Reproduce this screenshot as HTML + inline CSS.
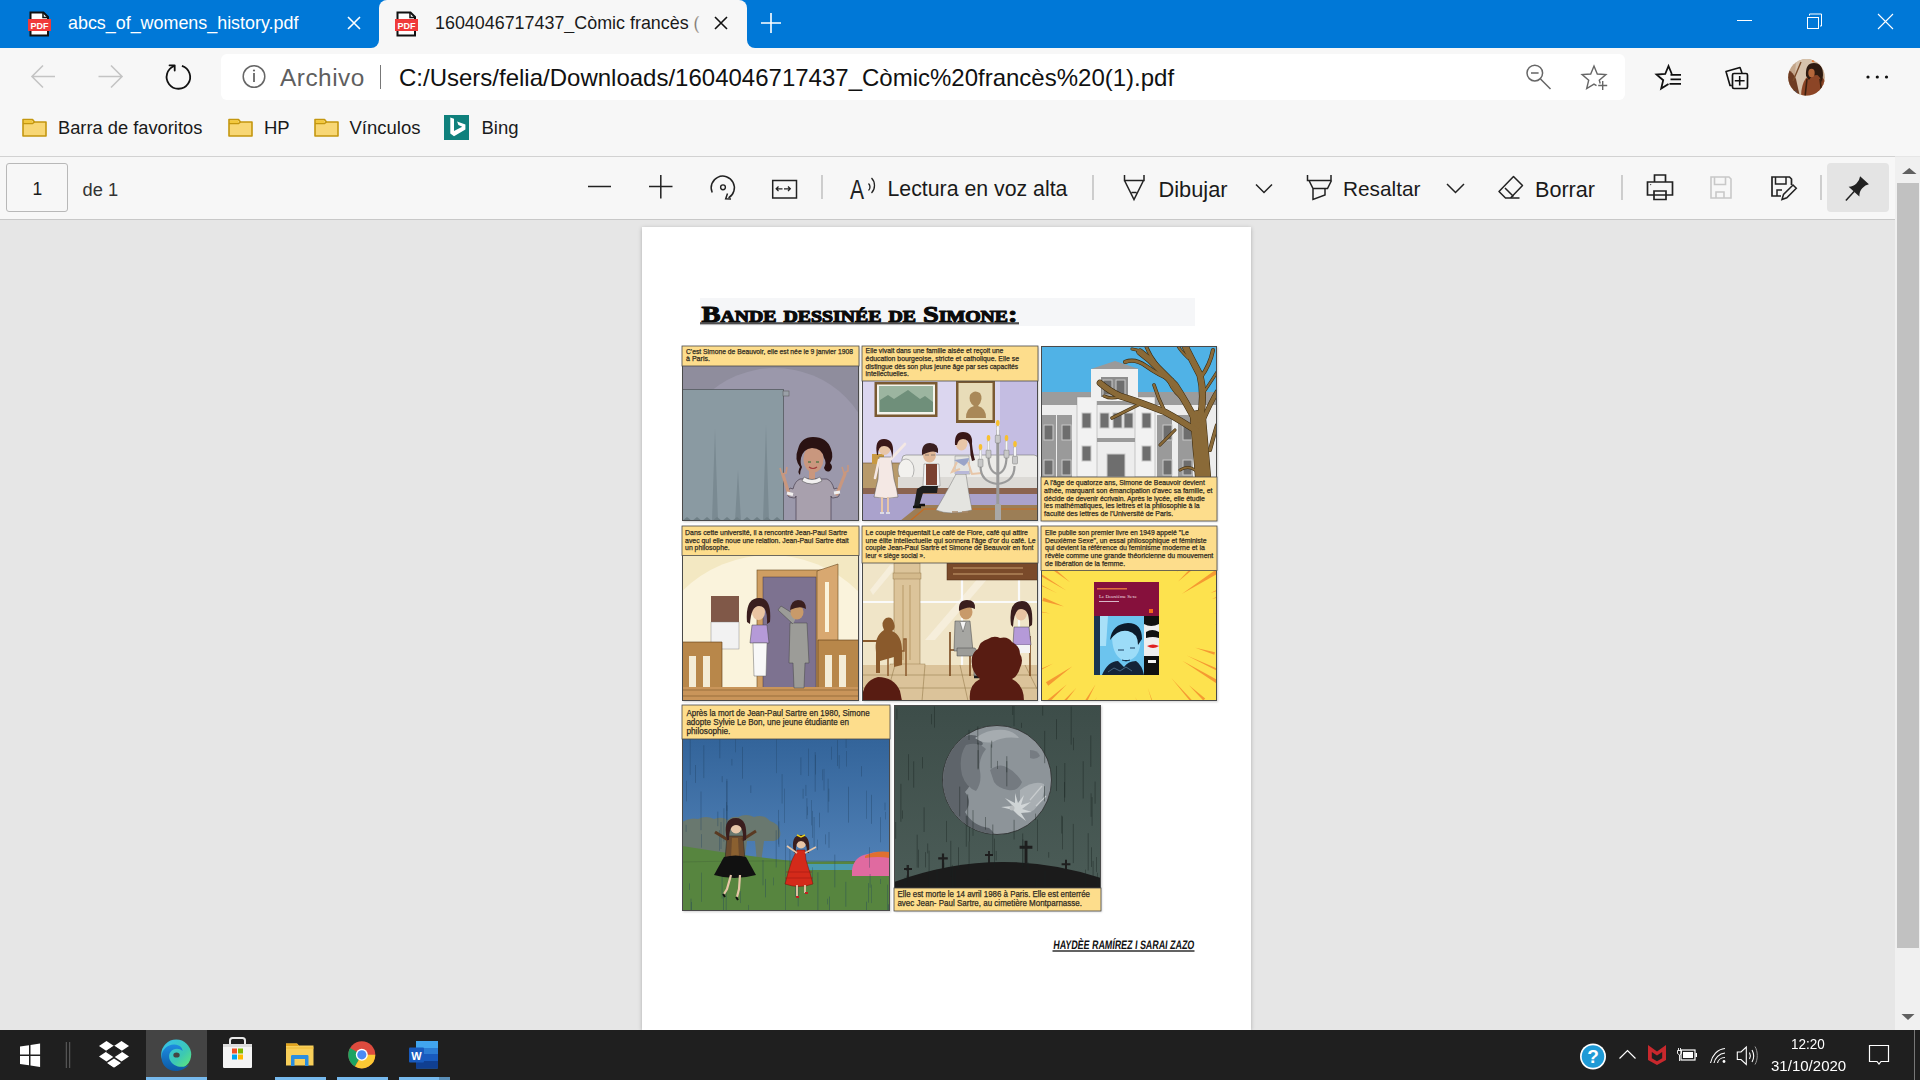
<!DOCTYPE html>
<html><head><meta charset="utf-8">
<style>
*{margin:0;padding:0;box-sizing:border-box}
html,body{width:1920px;height:1080px;overflow:hidden;background:#e6e6e6;font-family:"Liberation Sans",sans-serif}
.abs{position:absolute}
#tabbar{left:0;top:0;width:1920px;height:48px;background:#0078d7}
#nav{left:0;top:48px;width:1920px;height:60px;background:#f7f7f7}
#bm{left:0;top:108px;width:1920px;height:48px;background:#f7f7f7}
#pdftb{left:0;top:156px;width:1895px;height:64px;background:#f7f7f7;border-top:1px solid #d2d2d2;border-bottom:1px solid #c8c8c8}
#content{left:0;top:220px;width:1895px;height:810px;background:#e6e6e6}
#sb{left:1895px;top:157px;width:25px;height:873px;background:#f0f0f0}
#taskbar{left:0;top:1030px;width:1920px;height:50px;background:#1f1f1f}
.t{position:absolute;white-space:nowrap;line-height:1}
svg{position:absolute;overflow:visible}
</style></head><body>
<!-- TAB BAR -->
<div id="tabbar" class="abs"></div>
<div class="abs" style="left:379px;top:0;width:368px;height:48px;background:#f7f7f7;border-radius:8px 8px 0 0"></div>
<div class="abs" style="left:371px;top:40px;width:8px;height:8px;background:#f7f7f7"></div>
<div class="abs" style="left:363px;top:32px;width:16px;height:16px;background:#0078d7;border-radius:0 0 8px 0"></div>
<div class="abs" style="left:747px;top:40px;width:8px;height:8px;background:#f7f7f7"></div>
<div class="abs" style="left:747px;top:32px;width:16px;height:16px;background:#0078d7;border-radius:0 0 0 8px"></div>

<div class="t" style="left:68px;top:15px;font-size:17.9px;color:#fff">abcs_of_womens_history.pdf</div>
<div class="t" style="left:435px;top:15px;font-size:17.9px;color:#1a1a1a;width:265px;overflow:hidden">1604046717437_Còmic francès (1).pdf</div>
<div class="t" style="left:690px;top:15px;width:12px;height:24px;background:linear-gradient(90deg,rgba(247,247,247,0),#f7f7f7)"></div>

<div id="nav" class="abs"></div>
<div class="abs" style="left:221px;top:54px;width:1404px;height:46px;background:#fff;border-radius:6px"></div>
<div class="t" style="left:280px;top:66px;font-size:24.4px;letter-spacing:.5px;color:#5f5f5f">Archivo</div>
<div class="abs" style="left:380px;top:65px;width:1px;height:24px;background:#777"></div>
<div class="t" style="left:399px;top:66px;font-size:24px;color:#111">C:/Users/felia/Downloads/1604046717437_Còmic%20francès%20(1).pdf</div>

<div id="bm" class="abs"></div>
<div class="t" style="left:58px;top:118.5px;font-size:18.3px;color:#1a1a1a">Barra de favoritos</div>
<div class="t" style="left:264px;top:118.5px;font-size:18.5px;color:#1a1a1a">HP</div>
<div class="t" style="left:349.5px;top:118.5px;font-size:18.5px;color:#1a1a1a">Vínculos</div>
<div class="t" style="left:481.5px;top:118.5px;font-size:18.5px;color:#1a1a1a">Bing</div>

<div id="pdftb" class="abs"></div>
<div class="abs" style="left:6px;top:163px;width:62px;height:49px;background:#f7f7f7;border:1px solid #b8b8b8;border-radius:3px"></div>
<div class="t" style="left:32.5px;top:180.5px;font-size:17.5px;color:#1a1a1a">1</div>
<div class="t" style="left:82.5px;top:180.5px;font-size:18.3px;color:#333">de 1</div>
<div class="t" style="left:887.5px;top:179px;font-size:21.3px;color:#1a1a1a">Lectura en voz alta</div>
<div class="t" style="left:1158.5px;top:179px;font-size:21.8px;color:#1a1a1a">Dibujar</div>
<div class="t" style="left:1343px;top:179px;font-size:20.8px;color:#1a1a1a">Resaltar</div>
<div class="t" style="left:1535px;top:179px;font-size:21.6px;color:#1a1a1a">Borrar</div>
<div class="abs" style="left:1827px;top:163px;width:62px;height:49px;background:#e4e4e4;border-radius:4px"></div>

<div id="content" class="abs"></div>

<div id="sb" class="abs"></div>
<div class="abs" style="left:1897px;top:183px;width:22px;height:765px;background:#c1c1c1"></div>

<!-- PAGE -->
<div class="abs" style="left:642px;top:227px;width:609px;height:803px;background:#fff;box-shadow:0 1px 4px rgba(0,0,0,.25)"></div>
<!--COMIC_START-->
<svg style="left:0;top:0" width="1920" height="1080">
<defs><filter id="blur" x="-5%" y="-5%" width="110%" height="110%"><feGaussianBlur stdDeviation="0.8"/></filter>
<clipPath id="p1"><rect x="682" y="346" width="177" height="175"/></clipPath>
<clipPath id="p2"><rect x="862" y="346" width="176" height="175"/></clipPath>
<clipPath id="p3"><rect x="1041" y="346" width="176" height="175"/></clipPath>
<clipPath id="p4"><rect x="682" y="526" width="177" height="175"/></clipPath>
<clipPath id="p5"><rect x="862" y="526" width="176" height="175"/></clipPath>
<clipPath id="p6"><rect x="1041" y="526" width="176" height="175"/></clipPath>
<clipPath id="p7"><rect x="682" y="705" width="208" height="206"/></clipPath>
<clipPath id="p8"><rect x="894" y="705" width="207" height="206"/></clipPath>
</defs>
<rect x="700" y="298" width="495" height="28" fill="#f5f6f8"/>
<text x="701.5" y="321.5" font-size="23" font-weight="bold" font-family="Liberation Serif" style="font-variant:small-caps" textLength="316" lengthAdjust="spacingAndGlyphs" fill="#0a0a0a" stroke="#0a0a0a" stroke-width="1.1" stroke-linejoin="round">Bande dessinée de Simone:</text>
<rect x="700" y="322.3" width="319" height="1.6" fill="#333"/>
<rect x="700" y="323.9" width="319" height="0.8" fill="#999"/>
<rect x="683" y="347" width="177" height="175" fill="#000" opacity=".18" filter="url(#blur)"/>
<rect x="863" y="347" width="176" height="175" fill="#000" opacity=".18" filter="url(#blur)"/>
<rect x="1042" y="347" width="176" height="175" fill="#000" opacity=".18" filter="url(#blur)"/>
<rect x="683" y="527" width="177" height="175" fill="#000" opacity=".18" filter="url(#blur)"/>
<rect x="863" y="527" width="176" height="175" fill="#000" opacity=".18" filter="url(#blur)"/>
<rect x="1042" y="527" width="176" height="175" fill="#000" opacity=".18" filter="url(#blur)"/>
<rect x="683" y="706" width="208" height="206" fill="#000" opacity=".18" filter="url(#blur)"/>
<rect x="895" y="706" width="207" height="206" fill="#000" opacity=".18" filter="url(#blur)"/>
<g clip-path="url(#p1)">
<rect x="682" y="346" width="177" height="175" fill="#8f8d9d"/>
<circle cx="775" cy="468" r="100" fill="#9b98ab"/>
<rect x="682" y="389.5" width="101.5" height="131.5" fill="#8a9aa2" stroke="#555a60" stroke-width=".8"/>
<rect x="783" y="391" width="6" height="5" fill="#9aa0a8" stroke="#555" stroke-width=".5"/>
<path d="M715 429 L712 521 L718 521Z M738 470 L735 521 L741 521Z M766 425 L763 521 L769 521Z" fill="#7a8a92"/>
<path d="M682 521 l5-4 5 4 5-4 5 4 5-4 5 4 5-4 5 4 5-4 5 4 5-4 5 4 5-4 5 4 5-4 5 4 5-4 5 4 5-4 5 4" fill="#6f7f86"/>
<path d="M800 479 q-5 2-7 10 l-3 -1 q-4 6-1 9 l5 1 q2 0 2-2 v26 h35 v-26 q0 2 2 2 l5-1 q3-3-1-9 l-3 1 q-2-8-7-10z" fill="#a8a0ad" stroke="#3a3040" stroke-width=".6"/>
<path d="M789 494 l-6-19 M837 494 l8-20" stroke="#c9977e" stroke-width="3.2" stroke-linecap="round"/>
<path d="M787 493 l6 1.5 M834 493 l6-1" stroke="#f2f0f0" stroke-width="3"/>
<path d="M780 468 l2 6 4-1 1-6 M842 467 l2 6 4-2 0-6" stroke="#c9977e" stroke-width="1.6" fill="none"/>
<path d="M812 470 v9" stroke="#c9977e" stroke-width="6"/>
<path d="M804 477 q8 5 16 0 l2 4 q-10 6-20 0z" fill="#f2f0f0" stroke="#444" stroke-width=".5"/>
<ellipse cx="813.5" cy="459" rx="10" ry="13.5" fill="#c9977e"/>
<path d="M800 467 q-6-8-2-18 q3-12 15-12 q14 0 18 12 q3 8 -1 14 q4 4 0 8 q-4 2-6-3 q3-6 0-10 q-2-10-12-10 q-9 1-11 10 q-1 6 1 9 q-2 4-2 8 q-3-3 0-8z" fill="#2a1212"/>
<path d="M808 462 h3 M816 462 h3" stroke="#5a7a4a" stroke-width="1.5"/>
<path d="M809 467 q4 3 8 0" stroke="#a03a3a" stroke-width="1.2" fill="none"/>
</g>
<rect x="682.5" y="346.5" width="176" height="174" fill="none" stroke="#4a4a4a" stroke-width="1"/>
<rect x="682" y="346" width="177" height="20" fill="#fddd8c" stroke="#4a4a4a" stroke-width=".8"/>
<text x="686" y="353.6" font-size="7.6" textLength="167.0" lengthAdjust="spacingAndGlyphs" fill="#2e2a22" font-family="Liberation Sans" font-weight="normal" stroke="#2e2a22" stroke-width=".25">C'est Simone de Beauvoir, elle est née le 9 janvier 1908</text>
<text x="686" y="361.2" font-size="7.6" textLength="24.0" lengthAdjust="spacingAndGlyphs" fill="#2e2a22" font-family="Liberation Sans" font-weight="normal" stroke="#2e2a22" stroke-width=".25">à Paris.</text>
<g clip-path="url(#p2)">
<rect x="862" y="346" width="176" height="175" fill="#dbd6ef"/>
<path d="M1000 381 h38 v90 h-38z" fill="#c4bde2"/>
<rect x="874.5" y="382" width="63" height="35" fill="#7a5a32"/>
<rect x="877" y="384.5" width="58" height="30" fill="#f4f4ec"/>
<rect x="879" y="386" width="54" height="26" fill="#9cb5a0"/>
<path d="M880 400 l8-5 6 4 14-9 12 9 5-3 8 6 v10 h-53z" fill="#6f8f7a"/>
<rect x="956" y="381" width="39" height="42" fill="#7a5a32"/>
<rect x="958.5" y="383" width="34" height="37" fill="#e8dcb8"/>
<path d="M966 418 q0-10 8-12 q-6-4-4-11 q4-6 10-2 q4 6-2 13 q8 2 8 12z" fill="#a98858"/>
<rect x="862" y="463" width="40" height="33" fill="#b89a6a" stroke="#6a5030" stroke-width=".6"/>
<rect x="872" y="454" width="12" height="10" fill="#c89a42"/>
<rect x="902" y="455" width="136" height="36" rx="4" fill="#ecebe8" stroke="#777" stroke-width=".6"/><ellipse cx="906" cy="470" rx="8" ry="11" fill="#f2f1ee" stroke="#777" stroke-width=".5"/>
<rect x="898" y="477" width="140" height="14" fill="#dcdad6"/>
<rect x="862" y="491" width="176" height="30" fill="#aaa2cc"/>
<rect x="862" y="488" width="176" height="6" fill="#8b6450"/>
<path d="M900 521 l20-16 h118 v16z" fill="#9c7e56"/>
<path d="M910 521 l14-12 h114" fill="none" stroke="#c86a20" stroke-width="1.2"/>
<path d="M879 457 h12 l3 22 q3 10 4 18 q-12 3-24 0 q2-10 4-18z" fill="#f4e8e4" stroke="#555" stroke-width=".5"/>
<path d="M882 497 v15 M888 497 v15" stroke="#e8c6a8" stroke-width="2"/>
<path d="M880 513 h4 M886 513 h4" stroke="#eee" stroke-width="1.6"/>
<path d="M879 460 l-4 18 M890 460 l15-16" stroke="#f4e8e4" stroke-width="2.6" stroke-linecap="round"/>
<ellipse cx="884.5" cy="448" rx="6" ry="7" fill="#e8c6a8"/>
<path d="M877 455 q-3-16 7-16 q10 0 9 14 l-1 5 q0-12-8-12 q-6 0-6 9z" fill="#3a1818"/>
<path d="M924 464 h15 l1 22 h-17z" fill="#f2f2f2" stroke="#555" stroke-width=".4"/>
<rect x="926" y="464" width="11" height="21" fill="#7a4030"/>
<path d="M938 486 h-16 l-5 3 -3 17 h5 l4-13 h14z" fill="#1e1e1e"/>
<path d="M913 507 h8 M919 505 h6" stroke="#111" stroke-width="2.5"/>
<ellipse cx="929.5" cy="455" rx="6.5" ry="7.5" fill="#e0b898"/>
<path d="M922 455 q-1-12 8-12 q9 0 8 10 q-5-4-16 2z" fill="#3a2020"/>
<path d="M925 455 h4 M931 455 h4" stroke="#555" stroke-width=".6"/>
<path d="M956 474 q-6 12-20 36 q14 6 36 0 q-4-20-6-36z" fill="#e4e4e0" stroke="#777" stroke-width=".5"/>
<path d="M955 456 h14 l1 18 h-15z" fill="#e4e4e0" stroke="#777" stroke-width=".4"/>
<rect x="955" y="471" width="14" height="3" fill="#b8b8d8"/>
<path d="M957 462 l-5 10 l8-3 M968 462 l4 12 l10-1" stroke="#e8c6a8" stroke-width="2" fill="none"/>
<path d="M954 460 l10 6 q5-4 5-8z" fill="#9aa4c8"/>
<path d="M952 512 h6 M962 512 h6" stroke="#a88868" stroke-width="1.6"/>
<ellipse cx="961.5" cy="443" rx="6" ry="7.5" fill="#e8c6a8"/>
<path d="M955 445 q-1-13 8-13 q10 0 9 12 q1 10 3 16 l-3 1 q-2-6-2-14 q-1-8-7-8 q-5 0-6 6z" fill="#3a1818"/>
<path d="M997.8 430 v91" stroke="#9a9a9a" stroke-width="3"/>
<path d="M980.5 466 q0 16 17 18 q17-2 17-18 M988.5 456 q0 16 9 18 q9-2 9-18" fill="none" stroke="#9a9a9a" stroke-width="2.2"/>
<rect x="995" y="504" width="6" height="17" fill="#a8a8a8"/>
<rect x="978.0" y="459" width="5" height="8" rx="1" fill="#c8c8c8" stroke="#666" stroke-width=".4"/>
<rect x="979.2" y="450" width="2.6" height="9" fill="#f6f6f6" stroke="#888" stroke-width=".3"/>
<ellipse cx="980.5" cy="447" rx="1.8" ry="3" fill="#f8c030"/>
<rect x="986.0" y="450" width="5" height="8" rx="1" fill="#c8c8c8" stroke="#666" stroke-width=".4"/>
<rect x="987.2" y="441" width="2.6" height="9" fill="#f6f6f6" stroke="#888" stroke-width=".3"/>
<ellipse cx="988.5" cy="438" rx="1.8" ry="3" fill="#f8c030"/>
<rect x="995.3" y="435" width="5" height="8" rx="1" fill="#c8c8c8" stroke="#666" stroke-width=".4"/>
<rect x="996.5" y="426" width="2.6" height="9" fill="#f6f6f6" stroke="#888" stroke-width=".3"/>
<ellipse cx="997.8" cy="423" rx="1.8" ry="3" fill="#f8c030"/>
<rect x="1004.0" y="450" width="5" height="8" rx="1" fill="#c8c8c8" stroke="#666" stroke-width=".4"/>
<rect x="1005.2" y="441" width="2.6" height="9" fill="#f6f6f6" stroke="#888" stroke-width=".3"/>
<ellipse cx="1006.5" cy="438" rx="1.8" ry="3" fill="#f8c030"/>
<rect x="1012.5" y="456" width="5" height="8" rx="1" fill="#c8c8c8" stroke="#666" stroke-width=".4"/>
<rect x="1013.7" y="447" width="2.6" height="9" fill="#f6f6f6" stroke="#888" stroke-width=".3"/>
<ellipse cx="1015" cy="444" rx="1.8" ry="3" fill="#f8c030"/>
</g>
<rect x="862.5" y="346.5" width="175" height="174" fill="none" stroke="#4a4a4a" stroke-width="1"/>
<rect x="862" y="346" width="176" height="35" fill="#fddd8c" stroke="#4a4a4a" stroke-width=".8"/>
<text x="865.6" y="353.3" font-size="7.6" textLength="137.8" lengthAdjust="spacingAndGlyphs" fill="#2e2a22" font-family="Liberation Sans" font-weight="normal" stroke="#2e2a22" stroke-width=".25">Elle vivait dans une famille aisée et reçoit une</text>
<text x="865.6" y="361.0" font-size="7.6" textLength="153.4" lengthAdjust="spacingAndGlyphs" fill="#2e2a22" font-family="Liberation Sans" font-weight="normal" stroke="#2e2a22" stroke-width=".25">éducation bourgeoise, stricte et catholique. Elle se</text>
<text x="865.6" y="368.7" font-size="7.6" textLength="152.6" lengthAdjust="spacingAndGlyphs" fill="#2e2a22" font-family="Liberation Sans" font-weight="normal" stroke="#2e2a22" stroke-width=".25">distingue dès son plus jeune âge par ses capacités</text>
<text x="865.6" y="376.4" font-size="7.6" textLength="43.2" lengthAdjust="spacingAndGlyphs" fill="#2e2a22" font-family="Liberation Sans" font-weight="normal" stroke="#2e2a22" stroke-width=".25">intellectuelles.</text>
<g clip-path="url(#p3)">
<rect x="1041" y="346" width="176" height="175" fill="#50b2e6"/>
<rect x="1041" y="392" width="176" height="14" fill="#9c9c9c"/>
<rect x="1041" y="405" width="176" height="72" fill="#ededed"/>
<rect x="1041" y="415" width="15" height="62" fill="#9a9a9a"/>
<rect x="1057" y="415" width="15" height="62" fill="#9a9a9a"/>
<rect x="1157" y="415" width="15" height="62" fill="#9a9a9a"/>
<rect x="1178" y="415" width="15" height="62" fill="#9a9a9a"/>
<rect x="1077" y="397" width="20" height="80" fill="#f2f2f2" stroke="#888" stroke-width=".4"/>
<rect x="1135" y="397" width="20" height="80" fill="#f2f2f2" stroke="#888" stroke-width=".4"/>
<rect x="1097" y="400" width="38" height="4" fill="#9a9a9a"/>
<rect x="1097" y="438" width="38" height="4" fill="#9a9a9a"/>
<path d="M1091 369 l24-8 24 8z" fill="#9a9a9a"/>
<rect x="1091" y="369" width="47" height="32" fill="#f0f0f0"/>
<rect x="1101" y="377" width="27" height="20" fill="#8e8e8e"/>
<rect x="1103" y="380" width="9" height="15" fill="#6e6e6e" stroke="#c8c8c8" stroke-width="1"/>
<rect x="1116" y="380" width="9" height="15" fill="#6e6e6e" stroke="#c8c8c8" stroke-width="1"/>
<rect x="1082" y="413" width="9" height="15" fill="#6e6e6e" stroke="#c8c8c8" stroke-width="1"/>
<rect x="1100" y="413" width="9" height="15" fill="#6e6e6e" stroke="#c8c8c8" stroke-width="1"/>
<rect x="1113" y="413" width="9" height="15" fill="#6e6e6e" stroke="#c8c8c8" stroke-width="1"/>
<rect x="1124" y="413" width="9" height="15" fill="#6e6e6e" stroke="#c8c8c8" stroke-width="1"/>
<rect x="1142" y="413" width="9" height="15" fill="#6e6e6e" stroke="#c8c8c8" stroke-width="1"/>
<rect x="1044" y="425" width="9" height="15" fill="#6e6e6e" stroke="#c8c8c8" stroke-width="1"/>
<rect x="1062" y="425" width="9" height="15" fill="#6e6e6e" stroke="#c8c8c8" stroke-width="1"/>
<rect x="1163" y="425" width="9" height="15" fill="#6e6e6e" stroke="#c8c8c8" stroke-width="1"/>
<rect x="1183" y="425" width="9" height="15" fill="#6e6e6e" stroke="#c8c8c8" stroke-width="1"/>
<rect x="1082" y="446" width="9" height="15" fill="#6e6e6e" stroke="#c8c8c8" stroke-width="1"/>
<rect x="1142" y="446" width="9" height="15" fill="#6e6e6e" stroke="#c8c8c8" stroke-width="1"/>
<rect x="1044" y="460" width="9" height="15" fill="#6e6e6e" stroke="#c8c8c8" stroke-width="1"/>
<rect x="1062" y="460" width="9" height="15" fill="#6e6e6e" stroke="#c8c8c8" stroke-width="1"/>
<rect x="1163" y="460" width="9" height="15" fill="#6e6e6e" stroke="#c8c8c8" stroke-width="1"/>
<rect x="1183" y="460" width="9" height="15" fill="#6e6e6e" stroke="#c8c8c8" stroke-width="1"/>
<rect x="1107" y="454" width="18" height="23" fill="#6e6e6e" stroke="#ccc" stroke-width="1"/>
<path d="M1203 477 Q1200 440 1198 418" fill="none" stroke="#3a2a10" stroke-width="16.1" stroke-linecap="round" stroke-linejoin="round"/>
<path d="M1198 432 Q1180 420 1165 412 Q1140 402 1120 396 Q1108 390 1100 383" fill="none" stroke="#3a2a10" stroke-width="6.6" stroke-linecap="round" stroke-linejoin="round"/>
<path d="M1140 404 Q1128 410 1112 418" fill="none" stroke="#3a2a10" stroke-width="3.6" stroke-linecap="round" stroke-linejoin="round"/>
<path d="M1165 412 Q1158 398 1154 385" fill="none" stroke="#3a2a10" stroke-width="3.6" stroke-linecap="round" stroke-linejoin="round"/>
<path d="M1198 425 Q1185 400 1175 385 Q1160 370 1150 360 L1140 352" fill="none" stroke="#3a2a10" stroke-width="7.1" stroke-linecap="round" stroke-linejoin="round"/>
<path d="M1172 380 Q1160 376 1146 366 Q1135 358 1125 362" fill="none" stroke="#3a2a10" stroke-width="4.1" stroke-linecap="round" stroke-linejoin="round"/>
<path d="M1158 366 Q1150 356 1146 346" fill="none" stroke="#3a2a10" stroke-width="3.6" stroke-linecap="round" stroke-linejoin="round"/>
<path d="M1200 420 Q1205 395 1200 375 Q1192 360 1185 346" fill="none" stroke="#3a2a10" stroke-width="7.1" stroke-linecap="round" stroke-linejoin="round"/>
<path d="M1201 377 Q1210 365 1213 350" fill="none" stroke="#3a2a10" stroke-width="4.1" stroke-linecap="round" stroke-linejoin="round"/>
<path d="M1203 420 Q1212 400 1217 392" fill="none" stroke="#3a2a10" stroke-width="5.1" stroke-linecap="round" stroke-linejoin="round"/>
<path d="M1210 450 Q1214 435 1217 425" fill="none" stroke="#3a2a10" stroke-width="4.1" stroke-linecap="round" stroke-linejoin="round"/>
<path d="M1150 360 Q1142 350 1132 349" fill="none" stroke="#3a2a10" stroke-width="3.1" stroke-linecap="round" stroke-linejoin="round"/>
<path d="M1185 400 Q1175 395 1168 380" fill="none" stroke="#3a2a10" stroke-width="3.1" stroke-linecap="round" stroke-linejoin="round"/>
<path d="M1188 358 Q1180 350 1178 346" fill="none" stroke="#3a2a10" stroke-width="3.1" stroke-linecap="round" stroke-linejoin="round"/>
<path d="M1204 392 Q1212 380 1217 372" fill="none" stroke="#3a2a10" stroke-width="3.1" stroke-linecap="round" stroke-linejoin="round"/>
<path d="M1120 396 Q1112 400 1104 396" fill="none" stroke="#3a2a10" stroke-width="3.1" stroke-linecap="round" stroke-linejoin="round"/>
<path d="M1175 430 Q1165 440 1160 445" fill="none" stroke="#3a2a10" stroke-width="3.1" stroke-linecap="round" stroke-linejoin="round"/>
<path d="M1195 470 Q1188 465 1180 470" fill="none" stroke="#3a2a10" stroke-width="3.1" stroke-linecap="round" stroke-linejoin="round"/>
<path d="M1203 477 Q1200 440 1198 418" fill="none" stroke="#8a6a38" stroke-width="15" stroke-linecap="round" stroke-linejoin="round"/>
<path d="M1198 432 Q1180 420 1165 412 Q1140 402 1120 396 Q1108 390 1100 383" fill="none" stroke="#8a6a38" stroke-width="5.5" stroke-linecap="round" stroke-linejoin="round"/>
<path d="M1140 404 Q1128 410 1112 418" fill="none" stroke="#8a6a38" stroke-width="2.5" stroke-linecap="round" stroke-linejoin="round"/>
<path d="M1165 412 Q1158 398 1154 385" fill="none" stroke="#8a6a38" stroke-width="2.5" stroke-linecap="round" stroke-linejoin="round"/>
<path d="M1198 425 Q1185 400 1175 385 Q1160 370 1150 360 L1140 352" fill="none" stroke="#8a6a38" stroke-width="6" stroke-linecap="round" stroke-linejoin="round"/>
<path d="M1172 380 Q1160 376 1146 366 Q1135 358 1125 362" fill="none" stroke="#8a6a38" stroke-width="3" stroke-linecap="round" stroke-linejoin="round"/>
<path d="M1158 366 Q1150 356 1146 346" fill="none" stroke="#8a6a38" stroke-width="2.5" stroke-linecap="round" stroke-linejoin="round"/>
<path d="M1200 420 Q1205 395 1200 375 Q1192 360 1185 346" fill="none" stroke="#8a6a38" stroke-width="6" stroke-linecap="round" stroke-linejoin="round"/>
<path d="M1201 377 Q1210 365 1213 350" fill="none" stroke="#8a6a38" stroke-width="3" stroke-linecap="round" stroke-linejoin="round"/>
<path d="M1203 420 Q1212 400 1217 392" fill="none" stroke="#8a6a38" stroke-width="4" stroke-linecap="round" stroke-linejoin="round"/>
<path d="M1210 450 Q1214 435 1217 425" fill="none" stroke="#8a6a38" stroke-width="3" stroke-linecap="round" stroke-linejoin="round"/>
<path d="M1150 360 Q1142 350 1132 349" fill="none" stroke="#8a6a38" stroke-width="2" stroke-linecap="round" stroke-linejoin="round"/>
<path d="M1185 400 Q1175 395 1168 380" fill="none" stroke="#8a6a38" stroke-width="2" stroke-linecap="round" stroke-linejoin="round"/>
<path d="M1188 358 Q1180 350 1178 346" fill="none" stroke="#8a6a38" stroke-width="2" stroke-linecap="round" stroke-linejoin="round"/>
<path d="M1204 392 Q1212 380 1217 372" fill="none" stroke="#8a6a38" stroke-width="2" stroke-linecap="round" stroke-linejoin="round"/>
<path d="M1120 396 Q1112 400 1104 396" fill="none" stroke="#8a6a38" stroke-width="2" stroke-linecap="round" stroke-linejoin="round"/>
<path d="M1175 430 Q1165 440 1160 445" fill="none" stroke="#8a6a38" stroke-width="2" stroke-linecap="round" stroke-linejoin="round"/>
<path d="M1195 470 Q1188 465 1180 470" fill="none" stroke="#8a6a38" stroke-width="2" stroke-linecap="round" stroke-linejoin="round"/>
</g>
<rect x="1041.5" y="346.5" width="175" height="174" fill="none" stroke="#4a4a4a" stroke-width="1"/>
<rect x="1041" y="477" width="176" height="44" fill="#fddd8c" stroke="#4a4a4a" stroke-width=".8"/>
<text x="1044.1" y="485.2" font-size="7.6" textLength="160.7" lengthAdjust="spacingAndGlyphs" fill="#2e2a22" font-family="Liberation Sans" font-weight="normal" stroke="#2e2a22" stroke-width=".25">A l'âge de quatorze ans, Simone de Beauvoir devient</text>
<text x="1044.1" y="492.9" font-size="7.6" textLength="168.3" lengthAdjust="spacingAndGlyphs" fill="#2e2a22" font-family="Liberation Sans" font-weight="normal" stroke="#2e2a22" stroke-width=".25">athée, marquant son émancipation d'avec sa famille, et</text>
<text x="1044.1" y="500.7" font-size="7.6" textLength="160.7" lengthAdjust="spacingAndGlyphs" fill="#2e2a22" font-family="Liberation Sans" font-weight="normal" stroke="#2e2a22" stroke-width=".25">décide de devenir écrivain. Après le lycée, elle étudie</text>
<text x="1044.1" y="508.4" font-size="7.6" textLength="155.6" lengthAdjust="spacingAndGlyphs" fill="#2e2a22" font-family="Liberation Sans" font-weight="normal" stroke="#2e2a22" stroke-width=".25">les mathématiques, les lettres et la philosophie à la</text>
<text x="1044.1" y="516.2" font-size="7.6" textLength="129.0" lengthAdjust="spacingAndGlyphs" fill="#2e2a22" font-family="Liberation Sans" font-weight="normal" stroke="#2e2a22" stroke-width=".25">faculté des lettres de l'Université de Paris.</text>
<g clip-path="url(#p4)">
<rect x="682" y="526" width="177" height="175" fill="#f3e8c2"/>
<circle cx="770" cy="680" r="125" fill="#faf3dc"/>
<rect x="757" y="570" width="65" height="131" fill="#cf9e62" stroke="#6a4a20" stroke-width=".6"/>
<rect x="763" y="577" width="53" height="112" fill="#7d7290" stroke="#4a3a40" stroke-width=".5"/>
<path d="M817 571 l21-7 v124 l-21 3z" fill="#d8a870" stroke="#6a4a20" stroke-width=".6"/>
<rect x="825" y="582" width="4" height="50" fill="#fbf4dc"/>
<rect x="711" y="596" width="28" height="26" fill="#805848"/>
<rect x="711" y="622" width="28" height="27" fill="#f2f2f2" stroke="#777" stroke-width=".4"/>
<path d="M682 642 h40 v59 h-40z" fill="#b8874a" stroke="#5a3a10" stroke-width=".6"/>
<rect x="689" y="656" width="7" height="32" fill="#f4ecd6"/><rect x="703" y="656" width="7" height="32" fill="#f4ecd6"/>
<path d="M818 640 h41 v61 h-41z" fill="#b8874a" stroke="#5a3a10" stroke-width=".6"/>
<rect x="825" y="655" width="7" height="33" fill="#f4ecd6"/><rect x="839" y="655" width="7" height="33" fill="#f4ecd6"/>
<rect x="682" y="687" width="177" height="14" fill="#c9955a"/>
<path d="M682 690 h177 M682 696 h177" stroke="#6a4a20" stroke-width=".5"/>
<path d="M752 625 h15 l2 18 h-19z" fill="#b59ad8" stroke="#444" stroke-width=".5"/>
<path d="M753 643 h14 l-1 33 h-12z" fill="#f8f8f8" stroke="#666" stroke-width=".5"/>
<ellipse cx="758.5" cy="612" rx="6.5" ry="8" fill="#e9c4a2"/>
<path d="M747 622 q-2-24 12-24 q13 0 11 24 l-3 2 q1-18-8-18 q-8 0-9 18z" fill="#3a1e1e"/>
<path d="M790 623 h17 l2 40 h-4 l-1 25 h-10 l-1-25 h-4z" fill="#9c9c98" stroke="#444" stroke-width=".5"/>
<path d="M793 624 l-15-14 3-4 16 10" fill="#9c9c98" stroke="#444" stroke-width=".5"/>
<ellipse cx="797" cy="612" rx="6.5" ry="7.5" fill="#c89a6a"/>
<path d="M790 610 q1-10 8-10 q8 0 8 9 q-6-4-16 1z" fill="#3a1e1e"/>
</g>
<rect x="682.5" y="526.5" width="176" height="174" fill="none" stroke="#4a4a4a" stroke-width="1"/>
<rect x="682" y="526" width="177" height="29.5" fill="#fddd8c" stroke="#4a4a4a" stroke-width=".8"/>
<text x="685.1" y="534.8" font-size="7.6" textLength="162.1" lengthAdjust="spacingAndGlyphs" fill="#2e2a22" font-family="Liberation Sans" font-weight="normal" stroke="#2e2a22" stroke-width=".25">Dans cette université, il a rencontré Jean-Paul Sartre</text>
<text x="685.1" y="542.5" font-size="7.6" textLength="163.7" lengthAdjust="spacingAndGlyphs" fill="#2e2a22" font-family="Liberation Sans" font-weight="normal" stroke="#2e2a22" stroke-width=".25">avec qui elle noue une relation. Jean-Paul Sartre était</text>
<text x="685.1" y="550.3" font-size="7.6" textLength="44.6" lengthAdjust="spacingAndGlyphs" fill="#2e2a22" font-family="Liberation Sans" font-weight="normal" stroke="#2e2a22" stroke-width=".25">un philosophe.</text>
<g clip-path="url(#p5)">
<rect x="862" y="526" width="176" height="175" fill="#eee1c0"/>
<path d="M862 563 h176 v107 h-176z" fill="#f0e5c8"/>
<path d="M870 590 l20-25 h8 l-25 30z M925 640 l60-70 h10 l-60 70z" fill="#f6eedb"/>
<path d="M862 602 h176 M962 563 v107 M1019 563 v107" stroke="#fafafa" stroke-width="2.2"/>
<rect x="947" y="563" width="91" height="17" fill="#7a4a2a" stroke="#4a2a10" stroke-width=".5"/>
<path d="M953 568 h70 M953 574 h70" stroke="#c9a070" stroke-width="1.2"/>
<rect x="894" y="563" width="26" height="108" fill="#dcc49a" stroke="#8a7040" stroke-width=".5"/>
<rect x="893" y="573" width="28" height="6" fill="#d4ba8c" stroke="#8a7040" stroke-width=".4"/>
<path d="M903 585 v75 M910 585 v75" stroke="#b89a68" stroke-width="1"/>
<rect x="890" y="664" width="35" height="8" fill="#dcc49a" stroke="#8a7040" stroke-width=".4"/>
<path d="M862 665 h176 v36 h-176z" fill="#dbc39a"/>
<path d="M862 675 h176 M862 688 h176 M895 665 l-10 36 M925 665 l-3 36 M960 665 l8 36 M995 665 l15 36 M1025 665 l12 24" stroke="#8a7040" stroke-width=".5"/>
<path d="M876 652 q-2-16 8-22 q-4-8 2-12 q6-2 8 5 q2 6-2 8 q10 4 10 20 v14 l-8 2 v-10 l-14 4 v12 h-4z" fill="#8a5a2c"/>
<path d="M888 676 v-25 h16 v-12 h2 v37" fill="none" stroke="#8a5a2c" stroke-width="1.5"/>
<rect x="862" y="640" width="24" height="2" fill="#8a5a2c"/>
<path d="M950 632 v44 M950 650 h22 M970 650 v26" stroke="#7a4a20" stroke-width="1.6" fill="none"/>
<path d="M955 621 h15 l3 30 h-19z" fill="#a6a6a2" stroke="#444" stroke-width=".5"/>
<path d="M957 648 h18 l4 6 v22 h-5 v-20 h-17z" fill="#9c9c98" stroke="#444" stroke-width=".5"/>
<path d="M974 677 h8" stroke="#1a1a1a" stroke-width="2.5"/>
<path d="M960 622 l3 10 3-10" fill="#f4f4f4" stroke="#333" stroke-width=".4"/>
<ellipse cx="966" cy="612" rx="6.5" ry="7.5" fill="#c89a6a"/>
<path d="M959 611 q-1-11 8-11 q9 0 8 9 q-6-4-16 2z" fill="#3a1e1e"/>
<path d="M1030 636 v40" stroke="#7a4a20" stroke-width="1.6"/>
<path d="M1014 627 h15 l2 18 h-18z" fill="#b59ad8" stroke="#444" stroke-width=".5"/>
<path d="M1014 645 h16 v8 h-16z" fill="#f4f4f4"/>
<ellipse cx="1021" cy="613" rx="6" ry="7.5" fill="#e9c4a2"/>
<path d="M1011 625 q-3-24 11-24 q12 0 10 24 l-3 2 q1-18-8-18 q-7 0-8 18z" fill="#3a1e1e"/>
<path d="M970 701 q-2-16 10-22 q-10-8-8-22 q2-6 6-8 q2-8 10-10 q6-4 12-1 q8-2 12 4 q8 4 8 12 q4 6 0 14 q-2 8-8 11 q12 6 12 22z" fill="#581c12"/>
<path d="M862 701 q0-20 16-24 q16 0 22 14 l2 10z" fill="#581c12"/>
</g>
<rect x="862.5" y="526.5" width="175" height="174" fill="none" stroke="#4a4a4a" stroke-width="1"/>
<rect x="862" y="526" width="176" height="37" fill="#fddd8c" stroke="#4a4a4a" stroke-width=".8"/>
<text x="865.6" y="534.8" font-size="7.6" textLength="162.4" lengthAdjust="spacingAndGlyphs" fill="#2e2a22" font-family="Liberation Sans" font-weight="normal" stroke="#2e2a22" stroke-width=".25">Le couple fréquentait Le café de Flore, café qui attire</text>
<text x="865.6" y="542.5" font-size="7.6" textLength="170.0" lengthAdjust="spacingAndGlyphs" fill="#2e2a22" font-family="Liberation Sans" font-weight="normal" stroke="#2e2a22" stroke-width=".25">une élite intellectuelle qui sonnera l'âge d'or du café. Le</text>
<text x="865.6" y="550.3" font-size="7.6" textLength="167.8" lengthAdjust="spacingAndGlyphs" fill="#2e2a22" font-family="Liberation Sans" font-weight="normal" stroke="#2e2a22" stroke-width=".25">couple Jean-Paul Sartre et Simone de Beauvoir en font</text>
<text x="865.6" y="558.0" font-size="7.6" textLength="59.4" lengthAdjust="spacingAndGlyphs" fill="#2e2a22" font-family="Liberation Sans" font-weight="normal" stroke="#2e2a22" stroke-width=".25">leur « siège social ».</text>
<g clip-path="url(#p6)">
<rect x="1041" y="526" width="176" height="175" fill="#fde24e"/>
<path d="M1214.1 625.0 L1253.0 621.7 L1253.2 625.5z" fill="#f59a32"/>
<path d="M1217.2 638.1 L1261.3 641.0 L1260.9 645.2z" fill="#f59a32"/>
<path d="M1195.4 647.8 L1215.0 652.3 L1214.3 654.7z" fill="#f59a32"/>
<path d="M1186.4 655.3 L1226.6 672.7 L1225.5 675.0z" fill="#f59a32"/>
<path d="M1182.3 660.8 L1226.2 684.8 L1224.0 688.5z" fill="#f59a32"/>
<path d="M1189.0 685.2 L1205.2 698.5 L1203.3 700.5z" fill="#f59a32"/>
<path d="M1171.3 677.9 L1204.3 713.5 L1201.9 715.6z" fill="#f59a32"/>
<path d="M1179.7 702.4 L1195.3 720.5 L1191.2 723.3z" fill="#f59a32"/>
<path d="M1162.1 701.8 L1176.4 728.6 L1173.3 730.0z" fill="#f59a32"/>
<path d="M1147.8 688.1 L1163.5 731.4 L1161.0 732.2z" fill="#f59a32"/>
<path d="M1135.8 696.9 L1143.9 745.3 L1138.9 745.9z" fill="#f59a32"/>
<path d="M1125.6 716.7 L1127.0 754.1 L1122.3 754.0z" fill="#f59a32"/>
<path d="M1119.9 706.3 L1116.7 751.0 L1113.9 750.7z" fill="#f59a32"/>
<path d="M1097.9 716.0 L1089.0 747.1 L1085.8 746.0z" fill="#f59a32"/>
<path d="M1097.0 696.8 L1078.1 743.0 L1074.9 741.5z" fill="#f59a32"/>
<path d="M1095.5 684.6 L1076.9 721.8 L1072.7 719.4z" fill="#f59a32"/>
<path d="M1076.2 687.9 L1053.9 716.9 L1050.6 714.0z" fill="#f59a32"/>
<path d="M1066.7 684.4 L1041.1 710.7 L1038.2 707.6z" fill="#f59a32"/>
<path d="M1072.1 666.6 L1048.3 685.7 L1045.9 682.2z" fill="#f59a32"/>
<path d="M1053.2 663.6 L1027.3 677.2 L1026.3 675.2z" fill="#f59a32"/>
<path d="M1042.4 657.4 L1002.1 673.3 L1000.9 669.7z" fill="#f59a32"/>
<path d="M1043.0 638.6 L996.8 647.3 L996.1 641.4z" fill="#f59a32"/>
<path d="M1031.4 628.9 L982.6 631.9 L982.5 626.9z" fill="#f59a32"/>
<path d="M1050.1 613.6 L1019.2 609.2 L1019.6 606.6z" fill="#f59a32"/>
<path d="M1063.9 606.4 L1042.4 601.0 L1043.5 597.6z" fill="#f59a32"/>
<path d="M1057.2 593.2 L1016.2 574.3 L1017.2 572.2z" fill="#f59a32"/>
<path d="M1066.3 590.5 L1037.9 574.6 L1039.1 572.6z" fill="#f59a32"/>
<path d="M1070.1 582.2 L1031.6 555.2 L1034.9 551.0z" fill="#f59a32"/>
<path d="M1078.0 567.2 L1058.7 547.4 L1062.3 544.4z" fill="#f59a32"/>
<path d="M1080.9 554.3 L1068.6 537.4 L1070.7 536.0z" fill="#f59a32"/>
<path d="M1093.6 545.0 L1073.7 503.0 L1078.0 501.2z" fill="#f59a32"/>
<path d="M1104.2 549.2 L1089.4 506.1 L1092.6 505.2z" fill="#f59a32"/>
<path d="M1118.1 557.0 L1111.1 514.5 L1113.1 514.3z" fill="#f59a32"/>
<path d="M1129.9 532.6 L1128.3 511.9 L1132.2 512.0z" fill="#f59a32"/>
<path d="M1142.4 537.3 L1146.8 500.0 L1149.9 500.5z" fill="#f59a32"/>
<path d="M1154.0 536.1 L1165.4 490.3 L1168.3 491.1z" fill="#f59a32"/>
<path d="M1152.6 567.5 L1159.2 547.8 L1161.6 548.8z" fill="#f59a32"/>
<path d="M1175.0 548.5 L1194.0 513.6 L1196.3 515.0z" fill="#f59a32"/>
<path d="M1176.3 572.8 L1198.2 545.7 L1200.1 547.4z" fill="#f59a32"/>
<path d="M1178.1 581.4 L1199.8 558.7 L1202.3 561.4z" fill="#f59a32"/>
<path d="M1181.7 593.9 L1215.4 569.9 L1217.7 573.6z" fill="#f59a32"/>
<path d="M1210.6 593.1 L1228.6 583.7 L1229.9 586.8z" fill="#f59a32"/>
<path d="M1211.9 599.1 L1235.1 588.9 L1236.5 592.9z" fill="#f59a32"/>
<path d="M1213.2 613.5 L1242.0 607.5 L1242.3 609.6z" fill="#f59a32"/>
<rect x="1094" y="582" width="65" height="93" fill="#86103c"/>
<rect x="1097" y="588" width="30" height="1.5" fill="#e07040"/>
<text x="1099" y="598" font-size="5" font-family="Liberation Serif" fill="#f4e0e8">Le Deuxième Sexe</text>
<rect x="1099" y="601" width="20" height="1" fill="#d8b8c8"/>
<rect x="1149" y="609" width="4" height="4" fill="#f26a1b"/>
<rect x="1094" y="616" width="50" height="59" fill="#6cc4ee"/>
<path d="M1094 616 h6 v59 h-6z" fill="#1b3550"/>
<path d="M1100 616 h8 l-2 30 h-6z" fill="#a8e0f8"/>
<path d="M1112 636 q2-10 14-12 q12 0 14 10 q2 14-4 22 q-6 6-14 4 q-10-6-10-24z" fill="#9cdcf8"/>
<path d="M1110 640 q2-16 18-17 q14 0 14 16 l-4 6 q0-12-10-14 q-10-2-18 9z" fill="#0c1a2a"/>
<path d="M1118 650 h6 M1130 648 h5 M1122 660 q4 2 8 0" stroke="#1a3a5a" stroke-width="1"/>
<path d="M1102 675 q6-14 16-14 l6 6 q4-6 12-6 q6 4 8 14z" fill="#142438"/>
<path d="M1108 672 l6-4 6 3 6-4 6 4" stroke="#7aa8c8" stroke-width=".5" fill="none"/>
<rect x="1144" y="616" width="15" height="59" fill="#efefef"/>
<path d="M1144 616 h15 v8 q-8 4-15 0z M1146 632 q6-4 13 0 v6 q-6-2-13 0z M1144 656 h15 v19 h-15z" fill="#111"/>
<path d="M1147 646 q6-3 12 0 q-6 4-12 0z" fill="#e02020"/>
<rect x="1148" y="660" width="8" height="3" fill="#f4f4f4"/>
</g>
<rect x="1041.5" y="526.5" width="175" height="174" fill="none" stroke="#4a4a4a" stroke-width="1"/>
<rect x="1041" y="526" width="176" height="44.5" fill="#fddd8c" stroke="#4a4a4a" stroke-width=".8"/>
<text x="1045.1" y="534.8" font-size="7.6" textLength="143.6" lengthAdjust="spacingAndGlyphs" fill="#2e2a22" font-family="Liberation Sans" font-weight="normal" stroke="#2e2a22" stroke-width=".25">Elle publie son premier livre en 1949 appelé "Le</text>
<text x="1045.1" y="542.5" font-size="7.6" textLength="161.4" lengthAdjust="spacingAndGlyphs" fill="#2e2a22" font-family="Liberation Sans" font-weight="normal" stroke="#2e2a22" stroke-width=".25">Deuxième Sexe", un essai philosophique et féministe</text>
<text x="1045.1" y="550.3" font-size="7.6" textLength="159.7" lengthAdjust="spacingAndGlyphs" fill="#2e2a22" font-family="Liberation Sans" font-weight="normal" stroke="#2e2a22" stroke-width=".25">qui devient la référence du feminisme moderne et la</text>
<text x="1045.1" y="558.0" font-size="7.6" textLength="168.2" lengthAdjust="spacingAndGlyphs" fill="#2e2a22" font-family="Liberation Sans" font-weight="normal" stroke="#2e2a22" stroke-width=".25">révèle comme une grande théoricienne du mouvement</text>
<text x="1045.1" y="565.8" font-size="7.6" textLength="80.0" lengthAdjust="spacingAndGlyphs" fill="#2e2a22" font-family="Liberation Sans" font-weight="normal" stroke="#2e2a22" stroke-width=".25">de libération de la femme.</text>
<g clip-path="url(#p7)">
<defs><linearGradient id="sky7" x1="0" y1="0" x2="0" y2="1"><stop offset="0" stop-color="#33649a"/><stop offset="1" stop-color="#5b8bc0"/></linearGradient></defs>
<rect x="682" y="739" width="208" height="172" fill="url(#sky7)"/>
<path d="M682 822 q8-5 16-3 q8-4 16 0 q8-3 14 1 q4-4 10-3 q8-4 16 0 q10-3 16 4 q8 2 10 10 q2 8-6 10 h-10 l-3 22 h-4 l-2-22 h-8 l-3 22 h-4 l2-22 h-8 v22 h-68z" fill="#69786f"/>
<path d="M682 846 q60 10 120 16 l88-1 v50 h-208z" fill="#57853f"/>
<path d="M682 862 q80 -2 208 0" stroke="#4a6e3a" stroke-width=".6" fill="none"/>
<path d="M800 864 h55 l2 6 h-55z" fill="#4a9ab0"/>
<path d="M852 870 q2-14 16-16 q10-4 22 0 v22 h-38z" fill="#e06aa0"/>
<path d="M865 856 q10-6 25-4 v6 q-12-2-25 0z" fill="#e07030"/>
<path d="M776.2 830.2 v37.3" stroke="#1e3e5e" stroke-width=".6" opacity=".6"/>
<path d="M778.9 821.3 v25.6" stroke="#1e3e5e" stroke-width=".6" opacity=".6"/>
<path d="M721.0 822.0 v27.0" stroke="#1e3e5e" stroke-width=".6" opacity=".6"/>
<path d="M846.4 751.0 v15.6" stroke="#1e3e5e" stroke-width=".6" opacity=".6"/>
<path d="M701.7 872.6 v29.3" stroke="#1e3e5e" stroke-width=".6" opacity=".6"/>
<path d="M691.6 902.0 v38.8" stroke="#1e3e5e" stroke-width=".6" opacity=".6"/>
<path d="M817.7 839.6 v10.5" stroke="#1e3e5e" stroke-width=".6" opacity=".6"/>
<path d="M686.1 824.8 v7.1" stroke="#1e3e5e" stroke-width=".6" opacity=".6"/>
<path d="M722.2 776.1 v6.1" stroke="#1e3e5e" stroke-width=".6" opacity=".6"/>
<path d="M778.6 809.9 v34.5" stroke="#1e3e5e" stroke-width=".6" opacity=".6"/>
<path d="M789.9 843.8 v22.5" stroke="#1e3e5e" stroke-width=".6" opacity=".6"/>
<path d="M819.5 812.7 v14.7" stroke="#1e3e5e" stroke-width=".6" opacity=".6"/>
<path d="M888.5 904.3 v34.4" stroke="#1e3e5e" stroke-width=".6" opacity=".6"/>
<path d="M828.8 788.6 v13.0" stroke="#1e3e5e" stroke-width=".6" opacity=".6"/>
<path d="M742.5 746.9 v31.8" stroke="#1e3e5e" stroke-width=".6" opacity=".6"/>
<path d="M765.5 878.9 v18.5" stroke="#1e3e5e" stroke-width=".6" opacity=".6"/>
<path d="M880.4 879.0 v5.0" stroke="#1e3e5e" stroke-width=".6" opacity=".6"/>
<path d="M726.2 889.7 v21.4" stroke="#1e3e5e" stroke-width=".6" opacity=".6"/>
<path d="M885.0 802.6 v7.6" stroke="#1e3e5e" stroke-width=".6" opacity=".6"/>
<path d="M812.7 867.3 v14.4" stroke="#1e3e5e" stroke-width=".6" opacity=".6"/>
<path d="M701.0 791.5 v38.7" stroke="#1e3e5e" stroke-width=".6" opacity=".6"/>
<path d="M839.2 755.1 v13.6" stroke="#1e3e5e" stroke-width=".6" opacity=".6"/>
<path d="M703.8 745.2 v32.9" stroke="#1e3e5e" stroke-width=".6" opacity=".6"/>
<path d="M719.6 830.1 v20.7" stroke="#1e3e5e" stroke-width=".6" opacity=".6"/>
<path d="M722.3 859.4 v9.6" stroke="#1e3e5e" stroke-width=".6" opacity=".6"/>
<path d="M815.6 754.8 v19.7" stroke="#1e3e5e" stroke-width=".6" opacity=".6"/>
<path d="M726.9 780.9 v39.0" stroke="#1e3e5e" stroke-width=".6" opacity=".6"/>
<path d="M848.5 786.7 v36.0" stroke="#1e3e5e" stroke-width=".6" opacity=".6"/>
<path d="M726.4 802.0 v34.9" stroke="#1e3e5e" stroke-width=".6" opacity=".6"/>
<path d="M815.2 752.1 v39.6" stroke="#1e3e5e" stroke-width=".6" opacity=".6"/>
<path d="M726.9 778.9 v32.0" stroke="#1e3e5e" stroke-width=".6" opacity=".6"/>
<path d="M750.8 785.4 v7.6" stroke="#1e3e5e" stroke-width=".6" opacity=".6"/>
<path d="M701.6 834.1 v13.5" stroke="#1e3e5e" stroke-width=".6" opacity=".6"/>
<path d="M806.9 798.2 v20.9" stroke="#1e3e5e" stroke-width=".6" opacity=".6"/>
<path d="M880.6 817.2 v25.1" stroke="#1e3e5e" stroke-width=".6" opacity=".6"/>
<path d="M861.5 766.1 v10.4" stroke="#1e3e5e" stroke-width=".6" opacity=".6"/>
<path d="M870.1 874.0 v13.7" stroke="#1e3e5e" stroke-width=".6" opacity=".6"/>
<path d="M722.1 860.7 v37.9" stroke="#1e3e5e" stroke-width=".6" opacity=".6"/>
<path d="M723.5 896.5 v35.9" stroke="#1e3e5e" stroke-width=".6" opacity=".6"/>
<path d="M807.3 806.6 v8.6" stroke="#1e3e5e" stroke-width=".6" opacity=".6"/>
<path d="M691.0 898.7 v13.3" stroke="#1e3e5e" stroke-width=".6" opacity=".6"/>
<path d="M828.1 778.7 v33.8" stroke="#1e3e5e" stroke-width=".6" opacity=".6"/>
<path d="M805.9 784.9 v11.1" stroke="#1e3e5e" stroke-width=".6" opacity=".6"/>
<path d="M831.4 746.7 v13.0" stroke="#1e3e5e" stroke-width=".6" opacity=".6"/>
<path d="M798.2 879.9 v26.5" stroke="#1e3e5e" stroke-width=".6" opacity=".6"/>
<path d="M740.7 891.0 v12.1" stroke="#1e3e5e" stroke-width=".6" opacity=".6"/>
<path d="M686.4 780.8 v20.6" stroke="#1e3e5e" stroke-width=".6" opacity=".6"/>
<path d="M695.5 765.0 v17.9" stroke="#1e3e5e" stroke-width=".6" opacity=".6"/>
<path d="M800.9 757.4 v17.7" stroke="#1e3e5e" stroke-width=".6" opacity=".6"/>
<path d="M866.5 901.7 v28.0" stroke="#1e3e5e" stroke-width=".6" opacity=".6"/>
<path d="M825.4 834.4 v9.9" stroke="#1e3e5e" stroke-width=".6" opacity=".6"/>
<path d="M690.2 738.0 v36.9" stroke="#1e3e5e" stroke-width=".6" opacity=".6"/>
<path d="M827.4 898.7 v5.7" stroke="#1e3e5e" stroke-width=".6" opacity=".6"/>
<path d="M814.1 817.0 v30.6" stroke="#1e3e5e" stroke-width=".6" opacity=".6"/>
<path d="M748.7 904.9 v7.6" stroke="#1e3e5e" stroke-width=".6" opacity=".6"/>
<path d="M795.5 860.3 v36.5" stroke="#1e3e5e" stroke-width=".6" opacity=".6"/>
<path d="M834.8 854.6 v32.8" stroke="#1e3e5e" stroke-width=".6" opacity=".6"/>
<path d="M871.5 794.8 v29.0" stroke="#1e3e5e" stroke-width=".6" opacity=".6"/>
<path d="M868.6 883.1 v19.6" stroke="#1e3e5e" stroke-width=".6" opacity=".6"/>
<path d="M845.8 881.8 v25.0" stroke="#1e3e5e" stroke-width=".6" opacity=".6"/>
<path d="M811.7 800.0 v25.4" stroke="#1e3e5e" stroke-width=".6" opacity=".6"/>
<path d="M808.4 748.6 v27.4" stroke="#1e3e5e" stroke-width=".6" opacity=".6"/>
<path d="M887.6 884.6 v30.5" stroke="#1e3e5e" stroke-width=".6" opacity=".6"/>
<path d="M763.0 860.0 v25.3" stroke="#1e3e5e" stroke-width=".6" opacity=".6"/>
<path d="M773.7 877.5 v7.9" stroke="#1e3e5e" stroke-width=".6" opacity=".6"/>
<path d="M837.5 740.1 v26.0" stroke="#1e3e5e" stroke-width=".6" opacity=".6"/>
<path d="M782.1 774.1 v29.4" stroke="#1e3e5e" stroke-width=".6" opacity=".6"/>
<path d="M785.4 839.5 v37.2" stroke="#1e3e5e" stroke-width=".6" opacity=".6"/>
<path d="M735.7 736.9 v15.5" stroke="#1e3e5e" stroke-width=".6" opacity=".6"/>
<path d="M822.7 769.4 v10.9" stroke="#1e3e5e" stroke-width=".6" opacity=".6"/>
<path d="M869.6 847.2 v20.5" stroke="#1e3e5e" stroke-width=".6" opacity=".6"/>
<path d="M866.7 790.6 v28.3" stroke="#1e3e5e" stroke-width=".6" opacity=".6"/>
<path d="M723.9 808.3 v33.2" stroke="#1e3e5e" stroke-width=".6" opacity=".6"/>
<path d="M871.3 884.6 v18.5" stroke="#1e3e5e" stroke-width=".6" opacity=".6"/>
<path d="M803.1 788.8 v9.8" stroke="#1e3e5e" stroke-width=".6" opacity=".6"/>
<path d="M785.3 877.3 v34.7" stroke="#1e3e5e" stroke-width=".6" opacity=".6"/>
<path d="M829.5 896.5 v14.7" stroke="#1e3e5e" stroke-width=".6" opacity=".6"/>
<path d="M717.8 811.6 v14.6" stroke="#1e3e5e" stroke-width=".6" opacity=".6"/>
<path d="M727.1 805.4 v26.9" stroke="#1e3e5e" stroke-width=".6" opacity=".6"/>
<path d="M784.7 788.6 v34.4" stroke="#1e3e5e" stroke-width=".6" opacity=".6"/>
<path d="M885.3 811.9 v7.6" stroke="#1e3e5e" stroke-width=".6" opacity=".6"/>
<path d="M689.5 883.4 v6.5" stroke="#1e3e5e" stroke-width=".6" opacity=".6"/>
<path d="M829.0 832.0 v15.8" stroke="#1e3e5e" stroke-width=".6" opacity=".6"/>
<path d="M846.1 738.2 v9.8" stroke="#1e3e5e" stroke-width=".6" opacity=".6"/>
<path d="M776.7 739.2 v34.0" stroke="#1e3e5e" stroke-width=".6" opacity=".6"/>
<path d="M731.9 758.9 v6.6" stroke="#1e3e5e" stroke-width=".6" opacity=".6"/>
<path d="M812.6 810.9 v27.0" stroke="#1e3e5e" stroke-width=".6" opacity=".6"/>
<path d="M817.9 872.3 v38.5" stroke="#1e3e5e" stroke-width=".6" opacity=".6"/>
<path d="M824.0 768.9 v21.6" stroke="#1e3e5e" stroke-width=".6" opacity=".6"/>
<path d="M719.8 736.8 v21.5" stroke="#1e3e5e" stroke-width=".6" opacity=".6"/>
<path d="M727 836 h16 l2 24 h-20z" fill="#6a4a2e" stroke="#222" stroke-width=".5"/>
<path d="M732 838 h6 l1 20 h-8z" fill="#8a6030"/>
<path d="M724 857 q12-3 22 0 l10 18 q-22 6-42 0z" fill="#111"/>
<path d="M731 875 l-4 14 l-3 5 M740 875 l-1 14 l-2 8" stroke="#e8c6a8" stroke-width="2.2" fill="none"/>
<path d="M723 894 l2 3 M736 897 l2 3" stroke="#111" stroke-width="2"/>
<path d="M728 840 l-13-8 M742 840 l14-9" stroke="#5a3a22" stroke-width="3"/>
<ellipse cx="736" cy="826" rx="6" ry="7.5" fill="#e8c6a8"/>
<path d="M727 840 q-5-22 9-22 q12 0 10 22 l-3 1 q1-16-7-16 q-7 0-7 15z" fill="#3a1e1e"/>
<path d="M797 850 h8 l1 10 q4 12 7 24 q-14 5-28 0 q3-12 7-24z" fill="#d42a1a" stroke="#600" stroke-width=".4"/>
<path d="M786 872 h26 M785 878 h28" stroke="#a01a10" stroke-width=".6"/>
<path d="M797 885 v12 M805 885 v8" stroke="#e8c6a8" stroke-width="1.8"/>
<path d="M796 897 h3 M805 893 h3" stroke="#c02020" stroke-width="2"/>
<ellipse cx="801" cy="842" rx="5.5" ry="6.5" fill="#e8c6a8"/>
<path d="M794 853 q-4-18 7-18 q10 0 8 18 l-2 0 q0-12-6-12 q-6 0-5 12z" fill="#3a1e1e"/>
<path d="M797 835 l4 2 4-2" stroke="#e8d020" stroke-width="1.5" fill="none"/>
<path d="M797 853 l-10-7 M805 853 l11-6" stroke="#e8c6a8" stroke-width="1.6"/>
</g>
<rect x="682.5" y="705.5" width="207" height="205" fill="none" stroke="#4a4a4a" stroke-width="1"/>
<rect x="682" y="705" width="208" height="34" fill="#fddd8c" stroke="#4a4a4a" stroke-width=".8"/>
<text x="686.4" y="715.8" font-size="8.9" textLength="183.2" lengthAdjust="spacingAndGlyphs" fill="#2e2a22" font-family="Liberation Sans" font-weight="normal" stroke="#2e2a22" stroke-width=".25">Après la mort de Jean-Paul Sartre en 1980, Simone</text>
<text x="686.4" y="725.0" font-size="8.9" textLength="162.6" lengthAdjust="spacingAndGlyphs" fill="#2e2a22" font-family="Liberation Sans" font-weight="normal" stroke="#2e2a22" stroke-width=".25">adopte Sylvie Le Bon, une jeune étudiante en</text>
<text x="686.4" y="734.2" font-size="8.9" textLength="44.0" lengthAdjust="spacingAndGlyphs" fill="#2e2a22" font-family="Liberation Sans" font-weight="normal" stroke="#2e2a22" stroke-width=".25">philosophie.</text>
<g clip-path="url(#p8)">
<defs><linearGradient id="sky8" x1="0" y1="0" x2="0" y2="1"><stop offset="0" stop-color="#3d4d49"/><stop offset="1" stop-color="#4b5c57"/></linearGradient><radialGradient id="moon" cx=".55" cy=".45" r=".6"><stop offset="0" stop-color="#a0a7ac"/><stop offset="1" stop-color="#7e858a"/></radialGradient></defs>
<rect x="894" y="705" width="207" height="183" fill="url(#sky8)"/>
<circle cx="997" cy="780" r="54.5" fill="#8d9499" stroke="#222" stroke-width=".7"/>
<clipPath id="mc"><circle cx="997" cy="780" r="54"/></clipPath>
<g clip-path="url(#mc)">
<path d="M940 760 q8-20 25-24 q14-4 18 8 q-10 8-12 22 q4 16-6 26 q8 10 0 20 q8 14 24 16 q10 8 6 20 l-30 10 q-20-20-25-98z" fill="#5e646a"/>
<path d="M966 745 q12-4 20 4 q-8 10-6 22 q2 12-4 20 q-10-4-14-16 q-4-18 4-30z" fill="#72787e"/>
<path d="M990 770 q10-8 18-2 q8 4 14 14 q-4 10-14 8 q-10-2-14-8z" fill="#747a80"/>
<path d="M1030 750 q8 0 10 6 q-4 4-10 2z" fill="#767c82"/>
<path d="M975 738 q14-10 30-8 q10 2 14 8 q-16-2-26 4 q-10 2-18-4z" fill="#a6acb0"/>
<path d="M1020 790 q14-10 24-6 q2 14-10 26 q-10 6-14-4z" fill="#a9afb3"/>
<path d="M1030 800 l12-14 M1036 806 l10-10" stroke="#c8ccce" stroke-width="1.2"/>
</g>
<path d="M1013 810 l-12-3 12-1 -8-8 10 5 0-10 3 10 6-8 -3 10 10-3 -9 7 10 3 -11 1 5 8 -8-6z" fill="#d6dadc" opacity=".9"/>
<circle cx="1012" cy="808" r="2.5" fill="#b8bcbe"/>
<path d="M908 879 v-14 M904 869 h8" stroke="#1e1e1e" stroke-width="1.8"/>
<path d="M943 870.4 v-16.8 M938.2 858.4 h9.6" stroke="#1e1e1e" stroke-width="2.2"/>
<path d="M989 865 v-14 M985 855 h8" stroke="#1e1e1e" stroke-width="1.8"/>
<path d="M1026 863.2 v-22.400000000000002 M1019.6 847.2 h12.8" stroke="#1e1e1e" stroke-width="2.9"/>
<path d="M1066 875.2 v-15.400000000000002 M1061.6 864.2 h8.8" stroke="#1e1e1e" stroke-width="2.0"/>
<path d="M894 882 q103-38 207 -4 v10 h-207z" fill="#1b1b1b"/>
<path d="M1022.7 833.5 v32.8" stroke="#18221f" stroke-width=".7" opacity=".6"/>
<path d="M1088.2 833.2 v37.3" stroke="#18221f" stroke-width=".7" opacity=".6"/>
<path d="M900.9 783.8 v38.0" stroke="#18221f" stroke-width=".7" opacity=".6"/>
<path d="M1028.0 862.2 v9.0" stroke="#18221f" stroke-width=".7" opacity=".6"/>
<path d="M991.2 744.4 v24.0" stroke="#18221f" stroke-width=".7" opacity=".6"/>
<path d="M1012.7 702.4 v12.6" stroke="#18221f" stroke-width=".7" opacity=".6"/>
<path d="M952.3 864.9 v31.8" stroke="#18221f" stroke-width=".7" opacity=".6"/>
<path d="M927.7 843.5 v9.9" stroke="#18221f" stroke-width=".7" opacity=".6"/>
<path d="M1021.6 722.8 v5.1" stroke="#18221f" stroke-width=".7" opacity=".6"/>
<path d="M1073.6 737.7 v12.5" stroke="#18221f" stroke-width=".7" opacity=".6"/>
<path d="M1096.4 857.0 v15.1" stroke="#18221f" stroke-width=".7" opacity=".6"/>
<path d="M1092.1 797.1 v28.7" stroke="#18221f" stroke-width=".7" opacity=".6"/>
<path d="M937.0 869.4 v29.2" stroke="#18221f" stroke-width=".7" opacity=".6"/>
<path d="M1093.1 860.9 v15.5" stroke="#18221f" stroke-width=".7" opacity=".6"/>
<path d="M969.0 729.9 v10.1" stroke="#18221f" stroke-width=".7" opacity=".6"/>
<path d="M908.4 754.2 v26.1" stroke="#18221f" stroke-width=".7" opacity=".6"/>
<path d="M895.7 822.0 v16.8" stroke="#18221f" stroke-width=".7" opacity=".6"/>
<path d="M958.5 847.3 v21.8" stroke="#18221f" stroke-width=".7" opacity=".6"/>
<path d="M959.7 786.6 v29.7" stroke="#18221f" stroke-width=".7" opacity=".6"/>
<path d="M906.7 875.5 v5.8" stroke="#18221f" stroke-width=".7" opacity=".6"/>
<path d="M1048.7 852.1 v5.6" stroke="#18221f" stroke-width=".7" opacity=".6"/>
<path d="M1056.5 765.9 v25.2" stroke="#18221f" stroke-width=".7" opacity=".6"/>
<path d="M896.9 708.4 v11.3" stroke="#18221f" stroke-width=".7" opacity=".6"/>
<path d="M1090.8 735.4 v31.5" stroke="#18221f" stroke-width=".7" opacity=".6"/>
<path d="M1085.6 869.6 v17.1" stroke="#18221f" stroke-width=".7" opacity=".6"/>
<path d="M967.7 794.4 v32.1" stroke="#18221f" stroke-width=".7" opacity=".6"/>
<path d="M917.2 834.7 v32.9" stroke="#18221f" stroke-width=".7" opacity=".6"/>
<path d="M1071.2 706.6 v38.1" stroke="#18221f" stroke-width=".7" opacity=".6"/>
<path d="M913.7 761.3 v26.4" stroke="#18221f" stroke-width=".7" opacity=".6"/>
<path d="M1083.2 761.2 v37.3" stroke="#18221f" stroke-width=".7" opacity=".6"/>
<path d="M1006.8 756.2 v16.1" stroke="#18221f" stroke-width=".7" opacity=".6"/>
<path d="M931.4 714.1 v10.2" stroke="#18221f" stroke-width=".7" opacity=".6"/>
<path d="M1036.3 879.4 v10.7" stroke="#18221f" stroke-width=".7" opacity=".6"/>
<path d="M905.0 877.6 v23.7" stroke="#18221f" stroke-width=".7" opacity=".6"/>
<path d="M978.2 742.7 v25.8" stroke="#18221f" stroke-width=".7" opacity=".6"/>
<path d="M1064.4 782.0 v19.8" stroke="#18221f" stroke-width=".7" opacity=".6"/>
<path d="M906.4 864.9 v6.1" stroke="#18221f" stroke-width=".7" opacity=".6"/>
<path d="M996.2 850.9 v9.6" stroke="#18221f" stroke-width=".7" opacity=".6"/>
<path d="M1045.0 871.0 v27.1" stroke="#18221f" stroke-width=".7" opacity=".6"/>
<path d="M1056.5 719.2 v20.2" stroke="#18221f" stroke-width=".7" opacity=".6"/>
<path d="M925.6 852.1 v15.3" stroke="#18221f" stroke-width=".7" opacity=".6"/>
<path d="M987.9 879.9 v34.8" stroke="#18221f" stroke-width=".7" opacity=".6"/>
<path d="M1095.1 781.6 v22.1" stroke="#18221f" stroke-width=".7" opacity=".6"/>
<path d="M1044.5 786.2 v15.2" stroke="#18221f" stroke-width=".7" opacity=".6"/>
<path d="M977.8 726.4 v18.2" stroke="#18221f" stroke-width=".7" opacity=".6"/>
<path d="M1097.6 872.8 v26.9" stroke="#18221f" stroke-width=".7" opacity=".6"/>
<path d="M997.4 760.9 v8.1" stroke="#18221f" stroke-width=".7" opacity=".6"/>
<path d="M950.8 840.8 v35.4" stroke="#18221f" stroke-width=".7" opacity=".6"/>
<path d="M969.1 841.5 v32.1" stroke="#18221f" stroke-width=".7" opacity=".6"/>
<path d="M1037.4 819.5 v31.6" stroke="#18221f" stroke-width=".7" opacity=".6"/>
<path d="M969.5 826.8 v14.8" stroke="#18221f" stroke-width=".7" opacity=".6"/>
<path d="M994.6 838.6 v29.2" stroke="#18221f" stroke-width=".7" opacity=".6"/>
<path d="M955.2 870.2 v27.7" stroke="#18221f" stroke-width=".7" opacity=".6"/>
<path d="M1014.0 702.1 v24.1" stroke="#18221f" stroke-width=".7" opacity=".6"/>
<path d="M946.4 820.9 v21.2" stroke="#18221f" stroke-width=".7" opacity=".6"/>
<path d="M1062.4 816.5 v32.9" stroke="#18221f" stroke-width=".7" opacity=".6"/>
<path d="M966.3 815.9 v30.8" stroke="#18221f" stroke-width=".7" opacity=".6"/>
<path d="M1064.8 763.0 v34.5" stroke="#18221f" stroke-width=".7" opacity=".6"/>
<path d="M1073.3 823.9 v39.2" stroke="#18221f" stroke-width=".7" opacity=".6"/>
<path d="M1091.1 793.3 v23.5" stroke="#18221f" stroke-width=".7" opacity=".6"/>
<path d="M929.1 850.6 v37.8" stroke="#18221f" stroke-width=".7" opacity=".6"/>
<path d="M992.8 824.5 v30.2" stroke="#18221f" stroke-width=".7" opacity=".6"/>
<path d="M1044.7 730.9 v32.3" stroke="#18221f" stroke-width=".7" opacity=".6"/>
<path d="M1014.1 819.8 v19.7" stroke="#18221f" stroke-width=".7" opacity=".6"/>
<path d="M1022.9 839.4 v27.3" stroke="#18221f" stroke-width=".7" opacity=".6"/>
<path d="M1042.7 705.0 v10.6" stroke="#18221f" stroke-width=".7" opacity=".6"/>
<path d="M985.4 817.0 v12.7" stroke="#18221f" stroke-width=".7" opacity=".6"/>
<path d="M1035.6 813.6 v6.5" stroke="#18221f" stroke-width=".7" opacity=".6"/>
<path d="M991.7 740.7 v6.9" stroke="#18221f" stroke-width=".7" opacity=".6"/>
<path d="M922.4 757.1 v11.4" stroke="#18221f" stroke-width=".7" opacity=".6"/>
<path d="M934.6 706.4 v21.3" stroke="#18221f" stroke-width=".7" opacity=".6"/>
<path d="M973.0 810.1 v25.7" stroke="#18221f" stroke-width=".7" opacity=".6"/>
<path d="M943.8 862.6 v5.0" stroke="#18221f" stroke-width=".7" opacity=".6"/>
<path d="M978.1 750.1 v19.4" stroke="#18221f" stroke-width=".7" opacity=".6"/>
<path d="M918.6 849.6 v18.1" stroke="#18221f" stroke-width=".7" opacity=".6"/>
<path d="M902.4 810.4 v8.3" stroke="#18221f" stroke-width=".7" opacity=".6"/>
<path d="M1006.8 761.1 v25.3" stroke="#18221f" stroke-width=".7" opacity=".6"/>
<path d="M1091.5 847.3 v19.7" stroke="#18221f" stroke-width=".7" opacity=".6"/>
<path d="M1061.7 815.6 v17.9" stroke="#18221f" stroke-width=".7" opacity=".6"/>
<path d="M924.1 807.3 v24.7" stroke="#18221f" stroke-width=".7" opacity=".6"/>
</g>
<rect x="894.5" y="705.5" width="206" height="205" fill="none" stroke="#4a4a4a" stroke-width="1"/>
<rect x="894" y="888" width="207" height="23" fill="#fddd8c" stroke="#4a4a4a" stroke-width=".8"/>
<text x="897.4" y="897.2" font-size="8.9" textLength="192.6" lengthAdjust="spacingAndGlyphs" fill="#2e2a22" font-family="Liberation Sans" font-weight="normal" stroke="#2e2a22" stroke-width=".25">Elle est morte le 14 avril 1986 à Paris. Elle est enterrée</text>
<text x="897.4" y="906.4" font-size="8.9" textLength="184.6" lengthAdjust="spacingAndGlyphs" fill="#2e2a22" font-family="Liberation Sans" font-weight="normal" stroke="#2e2a22" stroke-width=".25">avec Jean- Paul Sartre, au cimetière Montparnasse.</text>
<text x="1053" y="949.3" font-size="12.3" font-weight="bold" font-family="Liberation Sans" textLength="141" lengthAdjust="spacingAndGlyphs" fill="#111" transform="translate(1053 949.3) skewX(-6) translate(-1053 -949.3)">HAYDÈE RAMÍREZ I SARAI ZAZO</text>
<rect x="1052.5" y="950.3" width="142" height="1.4" fill="#222"/>
</svg>
<!--COMIC_END-->

<div id="taskbar" class="abs"></div>

<!-- TASKBAR ICONS -->
<svg style="left:0;top:1030px" width="1920" height="50">
 <!-- windows logo -->
 <path d="M20 16.5l9-1.3v9.3h-9zM30.5 15l9.6-1.4v10.9h-9.6zM20 26h9v9.3l-9-1.3zM30.5 26h9.6v10.9l-9.6-1.4z" fill="#fff" transform="translate(0,0)"/>
 <path d="M66.3 12v26M69.7 12v26" stroke="#6a6a6a" stroke-width=".9"/>
 <!-- dropbox -->
 <g fill="#fff">
  <path d="M106.5 11l7.5 5-7.5 5-7.5-5z"/>
  <path d="M121.5 11l7.5 5-7.5 5-7.5-5z"/>
  <path d="M106.5 21.5l7.5 5-7.5 5-7.5-5z"/>
  <path d="M121.5 21.5l7.5 5-7.5 5-7.5-5z"/>
  <path d="M114 28.5l7 4.5-7 5-7-5z"/>
 </g>
 <path d="M106.5 21.2l7.5-5M121.5 21.2l-7.5-5M106.5 21.8l7.5 4.8M121.5 21.8l-7.5 4.8" stroke="#1f1f1f" stroke-width="1.3"/>
 <path d="M105 33l9 5.5 9-5.5" fill="none" stroke="#1f1f1f" stroke-width="1.2"/>
 <!-- edge active -->
 <rect x="146" y="0" width="61" height="50" fill="#444"/>
 <rect x="146" y="47" width="61" height="3" fill="#76b9ed"/>
 <defs>
  <linearGradient id="eg1" x1="0" y1="0" x2="1" y2="1"><stop offset="0" stop-color="#35c1f1"/><stop offset=".6" stop-color="#3cc8b4"/><stop offset="1" stop-color="#66eb6e"/></linearGradient>
  <linearGradient id="eg2" x1="0" y1="0" x2="0" y2="1"><stop offset="0" stop-color="#1e8ce0"/><stop offset="1" stop-color="#0c59a4"/></linearGradient>
 </defs>
 <circle cx="176.2" cy="24.5" r="15" fill="url(#eg1)"/>
 <path d="M161.5 27c0-8 7-13 13-12.5 5 .3 8 3 8 6.5-3-3-9-3-12 1-3 4-1 10 4 13 5 3 11 2 14.5-.5-3 4-8 6.5-13 6.5-8.5 0-14.5-6-14.5-14z" fill="url(#eg2)"/>
 <ellipse cx="176.5" cy="25" rx="3.2" ry="2.6" fill="#444"/>
 <!-- store -->
 <path d="M223 14h29v22.5c0 1-.5 1.5-1.5 1.5h-26c-1 0-1.5-.5-1.5-1.5z" fill="#f4f4f4"/>
 <path d="M223 14h29v3h-29z" fill="#dcdcdc"/>
 <path d="M230 14v-3.5c0-1.5 1-2.5 2.5-2.5h10c1.5 0 2.5 1 2.5 2.5v3.5" fill="none" stroke="#e8e8e8" stroke-width="2"/>
 <rect x="232" y="18.5" width="5" height="5" fill="#f25022"/><rect x="238" y="18.5" width="5" height="5" fill="#7fba00"/>
 <rect x="232" y="24.5" width="5" height="5" fill="#00a4ef"/><rect x="238" y="24.5" width="5" height="5" fill="#ffb900"/>
 <!-- explorer -->
 <path d="M286 13.5h11l2 2h14.5v20h-27.5z" fill="#f8cf5a"/>
 <path d="M286 13.5h11l2 2.5h-13z" fill="#e0a420"/>
 <path d="M286 17h27.5v2h-27.5z" fill="#f0bc3a" opacity=".6"/>
 <path d="M291 36v-9.5c0-1 .5-1.5 1.5-1.5h14.5c1 0 1.5.5 1.5 1.5v9.5h-3.5v-7h-10.5v7z" fill="#2b8ee0"/>
 <rect x="275" y="47" width="51" height="3" fill="#76b9ed"/>
 <!-- chrome -->
 <circle cx="361.8" cy="24.8" r="13.5" fill="#dd4b3e"/>
 <path d="M361.8 24.8L350.1 18A13.5 13.5 0 0 0 355 36.5z" fill="#1ea362"/>
 <path d="M361.8 24.8h13.5A13.5 13.5 0 0 1 355 36.5z" fill="#fcc934"/>
 <circle cx="361.8" cy="24.8" r="6" fill="#fff"/>
 <circle cx="361.8" cy="24.8" r="4.6" fill="#4a8af4"/>
 <rect x="337" y="47" width="51" height="3" fill="#76b9ed"/>
 <!-- word -->
 <rect x="416" y="11" width="22" height="27.5" rx="1" fill="#2b7cd3"/>
 <rect x="416" y="11" width="22" height="7" fill="#41a5ee"/>
 <rect x="416" y="24" width="22" height="7" fill="#185abd"/>
 <rect x="416" y="31" width="22" height="7.5" fill="#103f91"/>
 <rect x="409" y="17.5" width="15" height="15" rx="1" fill="#185abd"/>
 <text x="416.5" y="29.5" font-size="11" font-weight="bold" fill="#fff" text-anchor="middle" font-family="Liberation Sans">W</text>
 <rect x="399" y="47" width="40" height="3" fill="#76b9ed"/>
 <rect x="439" y="47" width="11" height="3" fill="#5a8fb8"/>
 <!-- help -->
 <circle cx="1593" cy="26.5" r="13" fill="#fff"/>
 <circle cx="1593" cy="26.5" r="11.3" fill="#1e9ad6"/>
 <text x="1593" y="33" font-size="19" font-weight="bold" fill="#fff" text-anchor="middle" font-family="Liberation Sans">?</text>
 <!-- chevron -->
 <path d="M1619.5 28.5l8-8 8 8" fill="none" stroke="#fff" stroke-width="1.2"/>
 <!-- mcafee -->
 <path d="M1648 15L1657 21.5L1666 15V30L1657 35L1648 30Z" fill="#c8282d"/>
 <path d="M1651.8 22L1657 25.5L1662.2 22V28.3L1657 31.3L1651.8 28.3Z" fill="#1f1f1f"/>
 <!-- battery -->
 <rect x="1681" y="20" width="14" height="10" fill="none" stroke="#fff" stroke-width="1.2"/>
 <rect x="1683" y="22" width="10" height="6" fill="#fff"/>
 <rect x="1695.5" y="23" width="1.5" height="4" fill="#fff"/>
 <path d="M1678.5 18v2.5M1680.5 18v2.5M1677.5 20.5h4v3l-2 1.5-2-1.5zM1679.5 25v6" fill="none" stroke="#fff" stroke-width=".9"/>
 <!-- wifi -->
 <path d="M1710.5 33c1.5-7.5 7-14 14.5-14.5M1714 33c1-5 5-9.5 11-10M1717.5 33c.5-2.5 3-5.5 7.5-5.5" fill="none" stroke="#fff" stroke-width="1.1"/>
 <circle cx="1724" cy="31.5" r="1.4" fill="#fff"/>
 <!-- volume -->
 <path d="M1737.3 22h3.7l5.3-5v17.5l-5.3-5h-3.7z" fill="none" stroke="#fff" stroke-width="1.1"/>
 <path d="M1749.5 22.5c1 2 1 4.5 0 6.5M1752 20c2 3.5 2 8.5 0 12" fill="none" stroke="#fff" stroke-width="1.1"/>
 <path d="M1755 16.5c3 5 3 13 0 18" fill="none" stroke="#999" stroke-width="1"/>
 <!-- notification -->
 <path d="M1869.5 15.5h19v16h-7.5l-2 2.5-2-2.5h-7.5z" fill="none" stroke="#fff" stroke-width="1.2"/>
 <path d="M1914.5 0v50" stroke="#777" stroke-width="1"/>
</svg>
<svg style="left:1895px;top:1005px" width="25" height="25"><path d="M6.5 9h13l-6.5 6z" fill="#606060"/></svg>

<div class="t" style="left:1791px;top:1036.3px;font-size:15px;color:#fff;transform:scaleX(.9);transform-origin:0 0">12:20</div>
<div class="t" style="left:1770.5px;top:1059.3px;font-size:14.6px;color:#fff;transform:scaleX(1.03);transform-origin:0 0">31/10/2020</div>

<!-- ICONS chrome -->
<svg style="left:0;top:0" width="1920" height="220">
 <!-- pdf icon tab1 -->
 <g transform="translate(28,11)">
  <path d="M2.5 1.5h13l4.5 4.5v18.5h-17.5z" fill="#fff" stroke="#111" stroke-width="2"/>
  <path d="M15 1.5v5h5" fill="none" stroke="#111" stroke-width="1.5"/>
  <rect x="0" y="8" width="23" height="12" fill="#f03a3a"/>
  <text x="11.5" y="17.6" font-size="9" font-weight="bold" fill="#fff" text-anchor="middle" font-family="Liberation Sans">PDF</text>
 </g>
 <g transform="translate(395,11)">
  <path d="M2.5 1.5h13l4.5 4.5v18.5h-17.5z" fill="#fff" stroke="#111" stroke-width="2"/>
  <path d="M15 1.5v5h5" fill="none" stroke="#111" stroke-width="1.5"/>
  <rect x="0" y="8" width="23" height="12" fill="#f03a3a"/>
  <text x="11.5" y="17.6" font-size="9" font-weight="bold" fill="#fff" text-anchor="middle" font-family="Liberation Sans">PDF</text>
 </g>
 <!-- close x tab1 -->
 <path d="M348 17l12 12M360 17l-12 12" stroke="#fff" stroke-width="1.6"/>
 <path d="M715 17l12 12M727 17l-12 12" stroke="#111" stroke-width="1.6"/>
 <!-- plus -->
 <path d="M771 13v20M761 23h20" stroke="#fff" stroke-width="1.6"/>
 <!-- window controls -->
 <path d="M1737 20.5h15" stroke="#fff" stroke-width="1"/>
 <rect x="1807.5" y="17.5" width="11" height="11" fill="none" stroke="#fff" stroke-width="1"/>
 <path d="M1809.5 15.5v-1.5h12v12h-1.5" fill="none" stroke="#fff" stroke-width="1"/>
 <path d="M1878 14l15 15M1893 14l-15 15" stroke="#fff" stroke-width="1.1"/>
 <!-- back/forward -->
 <path d="M55 76.5H32M43 65.5L32 76.5l11 11" fill="none" stroke="#c4c4c4" stroke-width="1.6"/>
 <path d="M98.5 76.5h23M111 65.5l11 11-11 11" fill="none" stroke="#c4c4c4" stroke-width="1.6"/>
 <!-- refresh -->
 <path d="M174.3 66A11.75 11.75 0 1 0 181.9 65.8" fill="none" stroke="#111" stroke-width="1.8"/>
 <path d="M169.5 65.3H174.7V70.5" fill="none" stroke="#111" stroke-width="1.8" stroke-linecap="round" stroke-linejoin="round"/>
 <!-- info -->
 <circle cx="254" cy="76.5" r="10.8" fill="none" stroke="#666" stroke-width="1.5"/>
 <path d="M254 73v9" stroke="#666" stroke-width="1.8"/><circle cx="254" cy="70.5" r="1.1" fill="#666"/>
 <!-- zoom out -->
 <circle cx="1534.8" cy="73.1" r="7.8" fill="none" stroke="#666" stroke-width="1.5"/>
 <path d="M1531 73.1h7.6M1540.5 79l10 10" stroke="#666" stroke-width="1.5"/>
 <!-- star plus -->
 <path d="M1600.2 83.5L1599.3 80.2L1605.9 74.6L1597.3 74L1594 66L1590.7 74L1582.1 74.6L1588.7 80.2L1586.7 88.6L1594 84.1L1596.5 85.6" fill="none" stroke="#666" stroke-width="1.4" stroke-linejoin="miter"/>
 <path d="M1602.7 81v9M1598.2 85.5h9" stroke="#666" stroke-width="1.4"/>
 <!-- favorites -->
 <path d="M1671.8 74L1668.5 66L1665.2 74L1656.6 74.6L1663.2 80.2L1661.2 88.6L1668.5 84.1" fill="none" stroke="#111" stroke-width="1.8"/>
 <path d="M1670.5 74.8h10.5M1670.5 79.3h10.5M1669.5 83.9h11.5" stroke="#111" stroke-width="1.8"/>
 <!-- collections -->
 <path d="M1731.8 85.5H1730L1726 71.5L1740 67.5L1742 73" fill="none" stroke="#111" stroke-width="1.6" stroke-linejoin="round"/>
 <rect x="1732.5" y="73.5" width="15" height="15" rx="1.5" fill="#f7f7f7" stroke="#111" stroke-width="1.7"/>
 <path d="M1739.7 76v9.5M1734.8 80.8h9.8" stroke="#111" stroke-width="1.6"/>
 <!-- avatar -->
 <defs><clipPath id="av"><circle cx="1806.5" cy="77.3" r="18.3"/></clipPath></defs>
 <g clip-path="url(#av)">
  <rect x="1788" y="59" width="37" height="37" fill="#c4a68a"/>
  <path d="M1796 59h18l-6 40h-14z" fill="#d6c2ac"/>
  <path d="M1788 70q5 2 8 9l4 18h-12z" fill="#6e3c22"/>
  <path d="M1801 62l-8 19" stroke="#7a4a28" stroke-width="1.4"/>
  <path d="M1796 90l1 6h-3z" fill="#3a5a8a"/>
  <path d="M1801 98q0-13 5-20q5-4 11-3q9 2 9 12v11z" fill="#8c4526"/>
  <path d="M1806 76q-1-13 8-13q9 0 9 12l-1 8q-2-7-5-8q-5 0-8 5z" fill="#2e1a10"/>
  <ellipse cx="1811.5" cy="73" rx="3.2" ry="4.2" fill="#b4663a"/>
  <path d="M1807 79l-2 18M1820 79l2 16" stroke="#3a2010" stroke-width="1.6"/>
  <circle cx="1813" cy="61" r="1.3" fill="#e07a3a"/>
 </g>
 <!-- dots -->
 <circle cx="1868" cy="77" r="1.6" fill="#111"/><circle cx="1877.3" cy="77" r="1.6" fill="#111"/><circle cx="1886.5" cy="77" r="1.6" fill="#111"/>
 <!-- folders -->
 <g id="fold">
  <path d="M23 119.5h9.5l2 2.5h11.5v14h-23z" fill="#f8d775" stroke="#c4970f" stroke-width="1.6" stroke-linejoin="round"/>
  <path d="M23 123.5h9.5l2-1.5" fill="none" stroke="#c4970f" stroke-width="1.5"/>
  <rect x="24" y="120.5" width="8" height="2.4" fill="#f3c83a"/>
 </g>
 <use href="#fold" x="206" y="0"/>
 <use href="#fold" x="292" y="0"/>
 <!-- bing -->
 <rect x="444" y="115" width="25" height="25" fill="#0f807c"/>
 <path d="M450.3 117.5l3.7 1.2v12.3l8.2-4.3-3.8-1.7-1.3-3.6 8.3 3v5.2l-11.4 6.6-3.7-2.6z" fill="#fff"/>
 <!-- pdf toolbar -->
 <path d="M588 186.5h23" stroke="#222" stroke-width="1.5"/>
 <path d="M660.8 175v23.5M649 186.5h23.5" stroke="#222" stroke-width="1.5"/>
 <path d="M712.2 192.5A11.6 11.6 0 1 1 728.5 197.8" fill="none" stroke="#222" stroke-width="1.5"/>
 <circle cx="723" cy="187.3" r="2.4" fill="none" stroke="#222" stroke-width="1.4"/>
 <path d="M727.5 193.5l-1.8 5.3 5.3.2" fill="none" stroke="#222" stroke-width="1.5"/>
 <rect x="772.7" y="180.5" width="23.8" height="17.5" fill="none" stroke="#222" stroke-width="1.5"/>
 <path d="M776.5 188.8h6M790 188.8h-6M778.5 186.5l-2.3 2.3 2.3 2.3M788 186.5l2.3 2.3-2.3 2.3" fill="none" stroke="#222" stroke-width="1.3"/>
 <path d="M822 175v24M1093 175v25M1622 175v25M1821 175v25" stroke="#b8b8b8" stroke-width="1.3"/>
 <text x="850" y="199.5" font-size="27" fill="#222" font-family="Liberation Sans" transform="translate(850 0) scale(.78 1) translate(-850 0)">A</text>
 <path d="M868.5 183.5c2 2 2 5 0 7M871.5 178c4 4 4 11 0 15" fill="none" stroke="#222" stroke-width="1.3"/>
 <path d="M1124.5 175v5.5h19.5v-5.5M1124.5 180.5l9.5 19 9.5-19M1131.5 192.5h5" fill="none" stroke="#222" stroke-width="1.5"/>
 <path d="M1256 184.5l8 8 8-8M1447 184l8.5 8.5 8.5-8.5" fill="none" stroke="#222" stroke-width="1.5"/>
 <path d="M1307.5 175v5.5h23.5v-5.5M1309 180.5l4 8h14.5l4-8M1313 188.5v11l12-4.5v-6.5" fill="none" stroke="#222" stroke-width="1.5"/>
 <path d="M1513.5 176.5l9 9-12 12.5h-5l-6.5-6.5zM1505 188l8.5 8.5M1510.5 198h9" fill="none" stroke="#222" stroke-width="1.5" stroke-linejoin="round"/>
 <!-- print -->
 <path d="M1654.5 182v-7h11v7M1647.5 182h25v13h-25zM1654 191h12v8.5h-12z" fill="none" stroke="#222" stroke-width="1.7"/>
 <circle cx="1650.7" cy="184.6" r=".6" fill="#222"/>
 <!-- save gray -->
 <path d="M1711 177h18l2 2v19h-20zM1714.5 177v7.5h11v-7.5M1716 198v-6h8v6" fill="none" stroke="#c8c8c8" stroke-width="1.6"/>
 <!-- save as -->
 <path d="M1781 196h-9v-19h17.5l2 2v6" fill="none" stroke="#222" stroke-width="1.7"/>
 <path d="M1775.5 177v7h10.5v-7M1777 196v-6h5" fill="none" stroke="#222" stroke-width="1.5"/>
 <path d="M1782 199.5l1.5-5 9.5-9.5 3.3 3.3-9.5 9.5z" fill="none" stroke="#222" stroke-width="1.5"/>
 <!-- pin -->
 <g transform="translate(1864.5 180.2) rotate(42.6)" fill="#222">
  <path d="M-6 0H6Q3.8 3 3.8 7.5Q3.8 12 7.3 15.5H-7.3Q-3.8 12 -3.8 7.5Q-3.8 3 -6 0z"/>
  <rect x="-.75" y="15" width="1.5" height="12.5"/>
 </g>
 <!-- scroll up -->
 <path d="M1902 174h14.5l-7.2-6z" fill="#606060"/>
</svg>

</body></html>
